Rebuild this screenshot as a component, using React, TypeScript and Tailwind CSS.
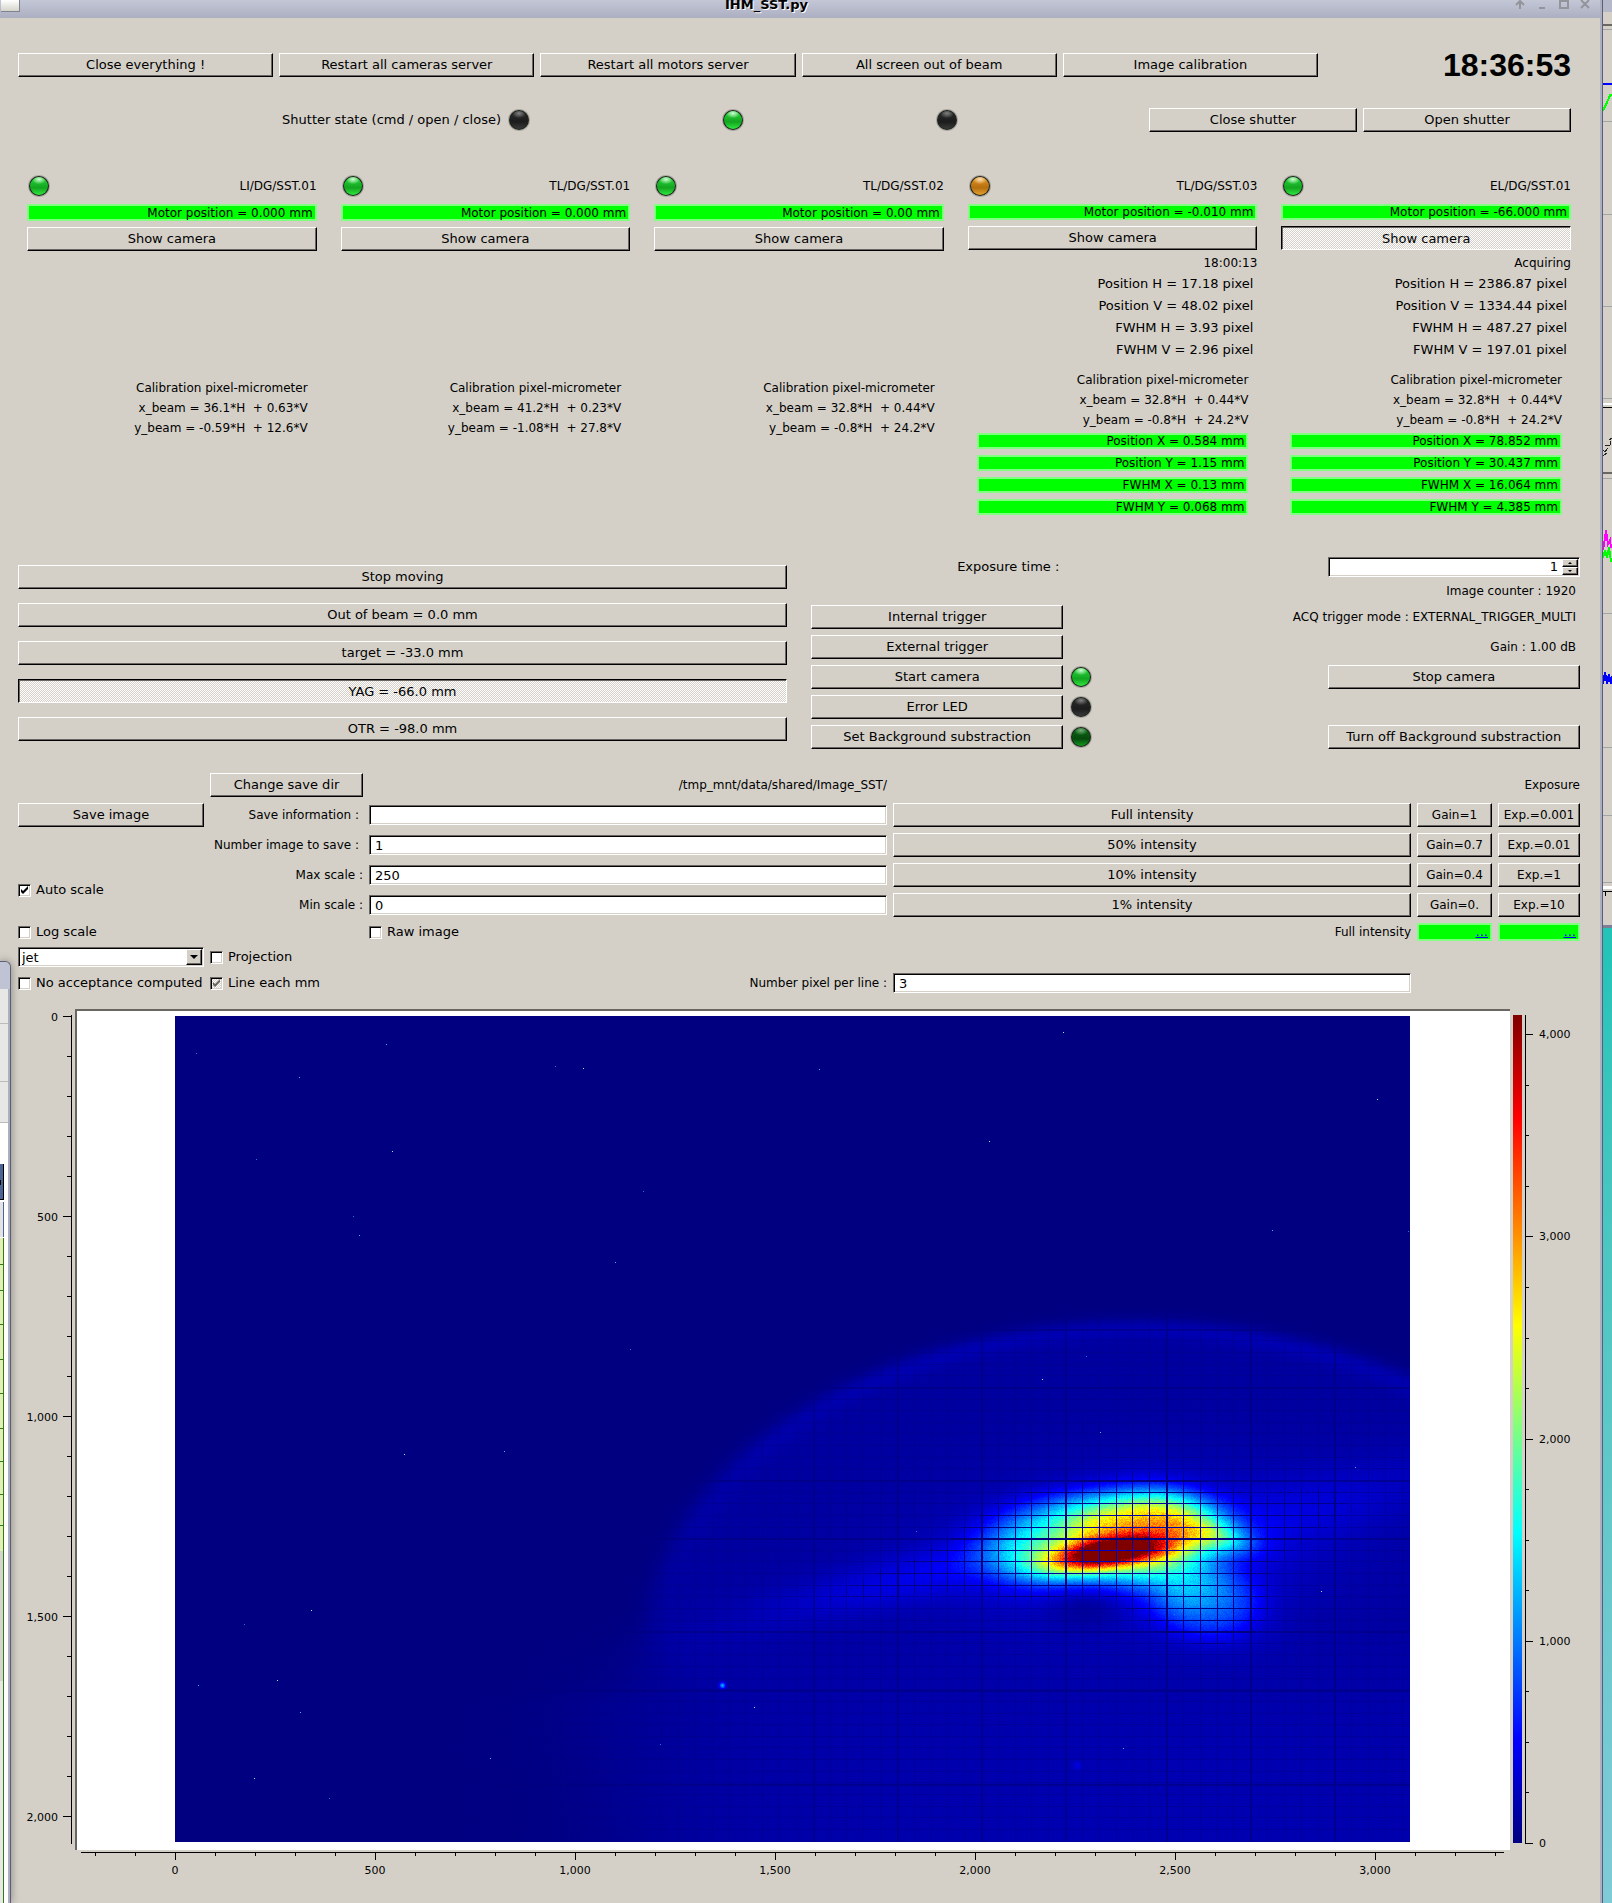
import { ReactNode, useEffect, useRef, useState } from "react";

const SUNKEN =
  "border border-t-[#6a6762] border-l-[#6a6762] border-r-white border-b-white shadow-[inset_1px_1px_0_#000,inset_-1px_-1px_0_#d4d0c8]";

const RAISED =
  "border border-t-white border-l-white border-r-black border-b-black shadow-[inset_-1px_-1px_0_#6a6762]";

const DITHER =
  "bg-[repeating-conic-gradient(#ffffff_0_25%,#d4d0c8_0_50%)] bg-[length:2px_2px]";

interface ButtonProps {
  children: ReactNode;
  pressed?: boolean;
  className?: string;
}

function Button({ children, pressed, className = "" }: ButtonProps) {
  return (
    <button
      className={`flex h-6 items-center justify-center whitespace-nowrap ${
        pressed
          ? `border border-t-black border-l-black border-r-white border-b-white pt-px shadow-[inset_1px_1px_0_#6a6762] ${DITHER}`
          : RAISED
      } ${className}`}
    >
      {children}
    </button>
  );
}

type LedColor = "green" | "darkgreen" | "black" | "orange";

const ledStops: Record<LedColor, string[]> = {
  green: ["#22d035", "#14a420", "#2fe83f", "#e4ffe6"],
  darkgreen: ["#0c6414", "#064a0c", "#149a20", "#7fb684"],
  black: ["#2a2a2a", "#1c1c1c", "#3a3a3a", "#8a8a8a"],
  orange: ["#e08f1c", "#b56f10", "#e5a02c", "#ffe9c8"],
};

function Led({ color, className = "" }: { color: LedColor; className?: string }) {
  const [top, mid, low, shine] = ledStops[color];
  return (
    <svg viewBox="0 0 22 22" className={`h-[22px] w-6 shrink-0 ${className}`}>
      <defs>
        <linearGradient id={`led-${color}`} x1="0" y1="0" x2="0" y2="1">
          <stop offset="0.1" stopColor={top} />
          <stop offset="0.6" stopColor={mid} />
          <stop offset="1" stopColor={low} />
        </linearGradient>
        <radialGradient id={`shine-${color}`} cx="0.5" cy="0.3" r="0.6">
          <stop offset="0" stopColor={shine} stopOpacity="0.9" />
          <stop offset="1" stopColor={shine} stopOpacity="0" />
        </radialGradient>
      </defs>
      <circle cx="11" cy="11" r="11" fill="#8d8a84" opacity="0.6" />
      <circle cx="11" cy="11" r="10" fill="#1c241c" />
      <circle cx="11" cy="11" r="9" fill={`url(#led-${color})`} />
      <ellipse cx="11" cy="6" rx="6" ry="4" fill={`url(#shine-${color})`} />
    </svg>
  );
}

function Value({ children, className = "h-4" }: { children: ReactNode; className?: string }) {
  return (
    <div
      className={`flex items-center justify-end whitespace-nowrap border-2 border-[#80ff80] bg-[#00ff00] pr-0.5 ${className}`}
    >
      {children}
    </div>
  );
}

interface CheckProps {
  label: string;
  checked?: boolean;
  partial?: boolean;
  className?: string;
}

function Check({ label, checked = false, partial, className = "" }: CheckProps) {
  const [on, setOn] = useState(checked);
  return (
    <label className={`flex items-center gap-[5px] whitespace-nowrap ${className}`}>
      <span className="relative flex h-[13px] w-[13px]">
        <input
          type="checkbox"
          checked={on}
          onChange={(e) => setOn(e.target.checked)}
          className={`h-[13px] w-[13px] appearance-none ${SUNKEN} ${partial ? DITHER : "bg-white"}`}
        />
        {on && (
          <svg viewBox="0 0 13 13" className="pointer-events-none absolute inset-0">
            <path
              d="M3 5v3l2 2 5-5V2L5 7z"
              fill={partial ? "#6a6762" : "#000"}
            />
          </svg>
        )}
      </span>
      {label}
    </label>
  );
}

interface FieldProps {
  id: string;
  label: string;
  value: string;
  labelClass: string;
  inputClass: string;
}

function Field({ id, label, value, labelClass, inputClass }: FieldProps) {
  return (
    <>
      <label
        htmlFor={id}
        className={`self-center whitespace-nowrap text-right text-[12px] leading-4 ${labelClass}`}
      >
        {label}
      </label>
      <input
        id={id}
        defaultValue={value}
        className={`h-5 min-w-0 self-center bg-white px-[5px] ${SUNKEN} ${inputClass}`}
      />
    </>
  );
}

interface Station {
  name: string;
  led: LedColor;
  motor: string;
  calibration: string[];
  active?: boolean;
  status?: string;
  pixels?: string[];
  beam?: string[];
}

const stations: Station[] = [
  {
    name: "LI/DG/SST.01",
    led: "green",
    motor: "0.000",
    calibration: ["x_beam = 36.1*H  + 0.63*V", "y_beam = -0.59*H  + 12.6*V"],
  },
  {
    name: "TL/DG/SST.01",
    led: "green",
    motor: "0.000",
    calibration: ["x_beam = 41.2*H  + 0.23*V", "y_beam = -1.08*H  + 27.8*V"],
  },
  {
    name: "TL/DG/SST.02",
    led: "green",
    motor: "0.00",
    calibration: ["x_beam = 32.8*H  + 0.44*V", "y_beam = -0.8*H  + 24.2*V"],
  },
  {
    name: "TL/DG/SST.03",
    led: "orange",
    motor: "-0.010",
    calibration: ["x_beam = 32.8*H  + 0.44*V", "y_beam = -0.8*H  + 24.2*V"],
    status: "18:00:13",
    pixels: [
      "Position H = 17.18 pixel",
      "Position V = 48.02 pixel",
      "FWHM H = 3.93 pixel",
      "FWHM V = 2.96 pixel",
    ],
    beam: [
      "Position X = 0.584 mm",
      "Position Y = 1.15 mm",
      "FWHM X = 0.13 mm",
      "FWHM Y = 0.068 mm",
    ],
  },
  {
    name: "EL/DG/SST.01",
    led: "green",
    motor: "-66.000",
    calibration: ["x_beam = 32.8*H  + 0.44*V", "y_beam = -0.8*H  + 24.2*V"],
    active: true,
    status: "Acquiring",
    pixels: [
      "Position H = 2386.87 pixel",
      "Position V = 1334.44 pixel",
      "FWHM H = 487.27 pixel",
      "FWHM V = 197.01 pixel",
    ],
    beam: [
      "Position X = 78.852 mm",
      "Position Y = 30.437 mm",
      "FWHM X = 16.064 mm",
      "FWHM Y = 4.385 mm",
    ],
  },
];

function StationPanel({ station }: { station: Station }) {
  return (
    <section className="flex flex-col text-[12px] leading-4">
      <div className="flex items-center justify-between">
        <Led color={station.led} />
        <span>{station.name}</span>
      </div>
      <Value className={station.status ? "mt-[7px] h-4" : "mt-[7px] h-[17px]"}>
        Motor position = {station.motor} mm
      </Value>
      <Button pressed={station.active} className="mt-1.5 text-[13px]">
        Show camera
      </Button>
      {station.status && (
        <div className="mt-[5px] text-right">
          <p>{station.status}</p>
          <div className="mt-0.5 pr-1 text-[13px] leading-[22px]">
            {station.pixels?.map((line) => (
              <p key={line}>{line}</p>
            ))}
          </div>
        </div>
      )}
      <div
        className={`mx-[9px] whitespace-pre text-right leading-5 ${
          station.status ? "mt-[9px]" : "mt-[127px]"
        }`}
      >
        <p>Calibration pixel-micrometer</p>
        {station.calibration.map((line) => (
          <p key={line}>{line}</p>
        ))}
      </div>
      {station.beam && (
        <div className="mx-[9px] mt-[3px] flex flex-col gap-1.5">
          {station.beam.map((line) => (
            <Value key={line}>{line}</Value>
          ))}
        </div>
      )}
    </section>
  );
}

const presets = [
  { intensity: "Full intensity", gain: "Gain=1", exp: "Exp.=0.001", row: "row-start-2" },
  { intensity: "50% intensity", gain: "Gain=0.7", exp: "Exp.=0.01", row: "row-start-3" },
  { intensity: "10% intensity", gain: "Gain=0.4", exp: "Exp.=1", row: "row-start-4" },
  { intensity: "1% intensity", gain: "Gain=0.", exp: "Exp.=10", row: "row-start-5" },
];

const W = 1235;
const H = 826;

// [cx, cy, rx, ry, angle, power, amplitude]
const lobes = [
  [930, 537, 52, 14, -9, 1, 0.72],
  [930, 521, 116, 47, -3, 2, 0.3],
  [962, 512, 74, 32, -3, 1.5, 0.26],
  [1000, 492, 46, 24, 20, 1, 0.1],
  [1045, 521, 34, 14, 12, 1, 0.18],
  [1008, 566, 64, 38, 24, 1, 0.18],
  [1034, 588, 52, 36, 0, 2, 0.07],
  [860, 550, 60, 26, 0, 1, 0.08],
  [960, 535, 190, 75, -5, 1, 0.06],
  [755, 556, 170, 24, -14, 1, 0.06],
  [1110, 500, 170, 34, -16, 1, 0.04],
  [547, 669, 3, 3, 0, 1, 0.25],
  [902, 749, 4, 4, 0, 1, 0.05],
];

const hotPixels = [
  [211, 28], [380, 50], [408, 52], [124, 61], [468, 175], [814, 125], [440, 246],
  [455, 333], [229, 438], [329, 435], [178, 200], [217, 135], [184, 219], [81, 143],
  [1202, 83], [1097, 214], [911, 340], [867, 363], [925, 416], [741, 515], [579, 691],
  [315, 742], [485, 728], [102, 664], [23, 669], [69, 608], [136, 594], [125, 696],
  [154, 782], [79, 762], [948, 732], [999, 598], [1146, 575], [1180, 451], [1233, 215],
  [888, 16], [644, 53], [21, 37],
];

function jet(v: number) {
  const c = (x: number) => Math.max(0, Math.min(1, x)) * 255;
  return [
    c(1.5 - Math.abs(4 * v - 3)),
    c(1.5 - Math.abs(4 * v - 2)),
    c(1.5 - Math.abs(4 * v - 1)),
  ];
}

function noise(x: number, y: number) {
  const s = Math.sin(x * 12.9898 + y * 78.233) * 43758.5453;
  return s - Math.floor(s) - 0.5;
}

// 0 = no line, 1 = thin, 2 = major
function lineAt(pos: number, origin: number, pitch: number, majors: number[]) {
  if (majors.some((m) => pos === m || pos === m + 1)) return 2;
  const k = Math.round((pos - origin) / pitch);
  return Math.round(origin + k * pitch) === pos ? 1 : 0;
}

const majorX = [638, 722, 806, 890, 991, 1075, 1159];
const majorY = [313, 371, 464, 522, 615, 674, 768];

function intensity(x: number, y: number) {
  const ex = (x - 962) / 490;
  const ey = (y - 632) / 326;
  const r = Math.hypot(ex, ey);
  const disc = y < 632 ? r : Math.abs(ex);
  // the rim softens towards the bottom of the screen
  const edge = y < 600 ? 60 : Math.max(9, 60 - (y - 600) * 0.6);
  let v = 0.031 / (1 + Math.exp((disc - 1) * edge));
  if (y < 632) v += 0.026 * Math.exp(-(((r - 0.98) / 0.03) ** 2)) * -ey;
  if (y > 600) {
    v += 0.01 * Math.min(1, (y - 600) / 150) * Math.exp(-(((x - 1000) / 330) ** 2));
    const q = Math.hypot((x - 962) / 590, (y - 620) / 420);
    v += (0.008 * Math.min(1, (y - 600) / 100)) / (1 + Math.exp((q - 1) * 25));
  }
  for (const [cx, cy, rx, ry, deg, p, a] of lobes) {
    const t = (deg * Math.PI) / 180;
    const dx = x - cx;
    const dy = y - cy;
    const u = (dx * Math.cos(t) + dy * Math.sin(t)) / rx;
    const w = (-dx * Math.sin(t) + dy * Math.cos(t)) / ry;
    v += a * Math.exp(-((u * u + w * w) ** p));
  }
  // shadow under the core
  const shade = Math.exp(-(((x - 910) / 38) ** 2) - ((y - 592) / 22) ** 2);
  return v * (1 - 0.6 * shade);
}

function BeamImage() {
  const ref = useRef<HTMLCanvasElement>(null);

  useEffect(() => {
    const ctx = ref.current?.getContext("2d");
    if (!ctx) return;
    const image = ctx.createImageData(W, H);
    const cols = Array.from({ length: W }, (_, x) => lineAt(x, 806, 16.83, majorX));
    for (let y = 0; y < H; y++) {
      const row = lineAt(y, 464, 11.63, majorY);
      for (let x = 0; x < W; x++) {
        let v = intensity(x, y);
        v += noise(x, y) * (v * 0.12 + 0.003);
        const line = Math.max(row, cols[x]);
        if (line === 2) v *= v > 0.08 ? 0 : 0.35;
        if (line === 1) v *= v > 0.08 ? 0.05 : 0.6;
        const [r, g, b] = jet(Math.max(0, Math.min(1, v)));
        const i = (y * W + x) * 4;
        image.data[i] = r;
        image.data[i + 1] = g;
        image.data[i + 2] = b;
        image.data[i + 3] = 255;
      }
    }
    ctx.putImageData(image, 0, 0);
    hotPixels.forEach(([x, y], i) => {
      ctx.fillStyle = ["#4fb4ff", "#2a6cff", "#7dffd0"][i % 3];
      ctx.fillRect(x, y, 1, 1);
    });
  }, []);

  return <canvas ref={ref} width={W} height={H} className="block h-auto w-full" />;
}

function range(from: number, to: number, step: number) {
  const out: number[] = [];
  for (let v = from; v <= to; v += step) out.push(v);
  return out;
}

const fmt = (v: number) => v.toLocaleString("en-US");

function YAxis() {
  return (
    <svg viewBox="0 0 57 841" className="w-full text-[11px]" shapeRendering="crispEdges">
      <path d="M53 6h1v829h-1z" />
      {range(0, 2000, 100).map((v) => {
        const major = v % 500 === 0;
        const y = 7 + v * 0.4;
        return (
          <g key={v}>
            <rect x={major ? 45 : 49} y={y} width={major ? 8 : 4} height="1" />
            {major && (
              <text x="40" y={y + 5} textAnchor="end">
                {fmt(v)}
              </text>
            )}
          </g>
        );
      })}
    </svg>
  );
}

function XAxis() {
  return (
    <svg viewBox="0 0 1435 53" className="w-full text-[11px]" shapeRendering="crispEdges">
      <path d="M6 2h1423v1H6z" />
      {range(-200, 3300, 100).map((v) => {
        const major = v % 500 === 0;
        const x = 100 + v * 0.4;
        return (
          <g key={v}>
            <rect x={x} y="2" width="1" height={major ? 8 : 4} />
            {major && (
              <text x={x} y="24" textAnchor="middle">
                {fmt(v)}
              </text>
            )}
          </g>
        );
      })}
    </svg>
  );
}

function ColorBar() {
  return (
    <svg viewBox="0 0 70 841" className="w-full text-[11px]" shapeRendering="crispEdges">
      <defs>
        <linearGradient id="jet" x1="0" y1="1" x2="0" y2="0">
          <stop offset="0" stopColor="#000080" />
          <stop offset="0.125" stopColor="#0000ff" />
          <stop offset="0.375" stopColor="#00ffff" />
          <stop offset="0.625" stopColor="#ffff00" />
          <stop offset="0.875" stopColor="#ff0000" />
          <stop offset="1" stopColor="#800000" />
        </linearGradient>
      </defs>
      <rect x="3" y="6" width="9" height="828" fill="url(#jet)" />
      <path d="M15 6h1v829h-1z" />
      {range(0, 4000, 250).map((v) => {
        const major = v % 1000 === 0;
        const y = Math.round(834 - v * 0.2022);
        return (
          <g key={v}>
            <rect x="15" y={y} width={major ? 8 : 4} height="1" />
            {major && (
              <text x="29" y={y + 4}>
                {fmt(v)}
              </text>
            )}
          </g>
        );
      })}
    </svg>
  );
}

function TitleBar() {
  return (
    <header className="flex h-[18px] items-start bg-linear-to-b from-[#c3c7d6] to-[#abafc1] pr-[7px] pl-px">
      <span className="h-3 w-[19px] border-r border-b border-[#7f8290] bg-linear-to-b from-white to-[#d4d4ca]" />
      <h1 className="flex-1 text-center text-[13px] leading-[10px] font-bold [text-shadow:1px_1px_0_#fff]">
        IHM_SST.py
      </h1>
      <svg viewBox="0 0 80 10" className="h-2.5 w-20" fill="none" stroke="#94959b" strokeWidth="2">
        <path d="M7 9V1M3 5l4-4 4 4M26 8h6M47 1h8v7h-8zM68 0l8 8M76 0l-8 8" />
      </svg>
    </header>
  );
}

// Neighbour window showing past the right edge
function RightWindow() {
  return (
    <svg viewBox="0 0 9 1903" className="absolute top-0 right-0 h-[1903px] w-[9px]" shapeRendering="crispEdges">
      <path d="M0 0h9v928H0z" fill="#d4d0c8" />
      <path d="M0 0h9v12H0z" fill="#b4b8c9" />
      <path d="M0 24h9v2H0zM0 472h9v2H0z" fill="#6a6762" />
      <path
        d="M0 29h9M0 121h9M0 214h9M0 306h9M0 398h9M0 478h9M0 613h9M0 747h9M0 815h9M0 882h9"
        stroke="#a5a4a6"
      />
      <path d="M0 403h9v2H0zM0 886h9v3H0z" fill="#fff" />
      <path d="M0 407h9v1H0zM0 891h9v1H0zM2 892h1v4H2z" />
      <path d="M0 84h9" stroke="#00f" strokeWidth="2" />
      <path d="M0 111l6-13 1-3h2" stroke="#0f0" strokeWidth="2" fill="none" />
      <path d="M0 550l2-12 1-8 2 14 2-4 1 8" stroke="#f0f" strokeWidth="2" fill="none" />
      <path d="M0 558l2-8 2 8 2-11 2 15" stroke="#0f0" strokeWidth="2" fill="none" />
      <path d="M0 684l2-12 2 12 2-10 2 10 1-8" stroke="#00f" fill="none" strokeWidth="2" />
      <path d="M0 456l4-3M0 450l2 2 3-4M2 446l5-1v-4M6 440l3-2" stroke="#222" fill="none" />
      <path d="M0 925h9v3H0z" fill="#7d8094" />
    </svg>
  );
}

const cellLines = [1264, 1290, 1324, 1359, 1393, 1428, 1461, 1494, 1525, 1551];

// Neighbour window lying over the left edge
function LeftWindow() {
  return (
    <div className="absolute top-[961px] bottom-0 left-0 w-[11px] overflow-hidden rounded-tr-md border-t border-r border-[#5b5f74] bg-[#abafc1] shadow-[0_0_8px_#00000060]">
      <svg viewBox="0 962 10 941" className="h-[941px] w-2.5" shapeRendering="crispEdges">
        <path d="M0 962h10v27H0z" fill="#bfc3d3" />
        <path d="M0 989h8v914H0z" fill="#fff" />
        <path d="M0 989h8v133H0z" fill="#e7e7e5" />
        <path d="M0 1023h8M0 1081h8M0 1122h8" stroke="#bbb" />
        <path d="M0 1164h4v36H0z" fill="#4a6496" />
        <path d="M3 1164h1v36H0v-1h3z" />
        <path d="M0 1180h1v5H0z" />
        <path d="M0 1202h3v35H0z" fill="#e3e3e3" />
        <path d="M3 1202h1v35H3z" fill="#4a6496" />
        <path d="M0 1238h4v313H0z" fill="#e2f0b8" />
        <path d={cellLines.map((y) => `M0 ${y}h4`).join("")} stroke="#347a10" />
        <path d="M0 1551h3v130H0z" fill="#d3d3d0" />
        <path d="M0 1681h3v222H0z" fill="#e7e7e5" />
        <path d="M3 1238h1v665H3z" fill="#347a10" />
      </svg>
    </div>
  );
}

export default function App() {
  const [exposure, setExposure] = useState(1);

  return (
    <div className="relative min-h-screen overflow-hidden bg-linear-to-b from-[#22c4b8] from-50% to-[#7fcbd8] font-['DejaVu_Sans',sans-serif] text-[13px] leading-4 text-black">
      <RightWindow />
      <main className="relative mr-[9px] min-h-screen border-r border-[#5b5f74] bg-[#abafc1] pr-0.5">
        <TitleBar />
        <div className="min-h-[1885px] bg-[#d4d0c8] pt-[35px] pr-5 pl-[18px]">
          <div className="mr-[9px] flex items-center gap-1.5">
            <Button className="flex-1">Close everything !</Button>
            <Button className="flex-1">Restart all cameras server</Button>
            <Button className="flex-1">Restart all motors server</Button>
            <Button className="flex-1">All screen out of beam</Button>
            <Button className="flex-1">Image calibration</Button>
            <time className="w-[247px] text-right font-['Liberation_Sans',Arial,sans-serif] text-[32px] leading-6 font-bold">
              18:36:53
            </time>
          </div>

          <div className="mt-[31px] mr-[9px] grid grid-cols-[1fr_208px_208px_208px_208px_208px] items-center gap-1.5">
            <span className="text-right">Shutter state (cmd / open / close)</span>
            <Led color="black" />
            <Led color="green" />
            <Led color="black" />
            <Button>Close shutter</Button>
            <Button>Open shutter</Button>
          </div>

          <div className="mt-[43px] mr-[9px] ml-[9px] grid grid-cols-5 gap-6">
            {stations.map((s) => (
              <StationPanel key={s.name} station={s} />
            ))}
          </div>

          <div className="mt-[42px] grid grid-cols-2 gap-6">
            <div className="flex flex-col gap-3.5 pt-2">
              <Button>Stop moving</Button>
              <Button>Out of beam = 0.0 mm</Button>
              <Button>target = -33.0 mm</Button>
              <Button pressed>YAG = -66.0 mm</Button>
              <Button>OTR = -98.0 mm</Button>
            </div>
            <div>
              <div className="grid grid-cols-3 gap-1.5">
                <label htmlFor="exposure" className="self-center pr-1 text-right">
                  Exposure time :
                </label>
                <div className={`col-start-3 flex h-5 bg-white p-px ${SUNKEN}`}>
                  <input
                    id="exposure"
                    inputMode="numeric"
                    value={exposure}
                    onChange={(e) => setExposure(Number(e.target.value) || 0)}
                    className="min-w-0 flex-1 bg-transparent pr-1 text-right outline-none"
                  />
                  <div className="flex w-4 flex-col">
                    <button
                      onClick={() => setExposure(exposure + 1)}
                      className={`flex flex-1 items-center justify-center bg-[#d4d0c8] ${RAISED}`}
                    >
                      <svg viewBox="0 0 4 2" className="h-0.5 w-1">
                        <path d="M0 2h4L2 0z" />
                      </svg>
                    </button>
                    <button
                      onClick={() => setExposure(exposure - 1)}
                      className={`flex flex-1 items-center justify-center bg-[#d4d0c8] ${RAISED}`}
                    >
                      <svg viewBox="0 0 4 2" className="h-0.5 w-1">
                        <path d="M0 0h4L2 2z" />
                      </svg>
                    </button>
                  </div>
                </div>
              </div>
              <p className="pr-1 text-right text-[12px] leading-7">Image counter : 1920</p>
              <div className="grid grid-cols-3 items-center gap-1.5">
                <Button>Internal trigger</Button>
                <p className="col-span-2 pr-1 text-right text-[12px]">
                  ACQ trigger mode : EXTERNAL_TRIGGER_MULTI
                </p>
                <Button>External trigger</Button>
                <p className="col-span-2 pr-1 text-right text-[12px]">Gain : 1.00 dB</p>
                <Button>Start camera</Button>
                <Led color="green" />
                <Button>Stop camera</Button>
                <Button>Error LED</Button>
                <Led color="black" className="col-span-2" />
                <Button>Set Background substraction</Button>
                <Led color="darkgreen" />
                <Button>Turn off Background substraction</Button>
              </div>
            </div>
          </div>

          <div className="mt-6 grid grid-cols-[186px_153px_1fr_1fr_75px_82px] grid-rows-[24px_24px_24px_24px_24px_18px_20px_20px] gap-1.5">
            <Button className="col-start-2 row-start-1">Change save dir</Button>
            <p className="col-start-3 row-start-1 self-center text-right text-[12px]">
              /tmp_mnt/data/shared/Image_SST/
            </p>
            <p className="col-start-6 row-start-1 self-center text-right text-[12px]">Exposure</p>

            <Button className="col-start-1 row-start-2">Save image</Button>
            <Field
              id="info"
              label="Save information :"
              value=""
              labelClass="col-start-2 row-start-2 pr-1"
              inputClass="col-start-3 row-start-2"
            />
            <Field
              id="count"
              label="Number image to save :"
              value="1"
              labelClass="col-start-2 row-start-3 pr-1"
              inputClass="col-start-3 row-start-3"
            />
            <Field
              id="max"
              label="Max scale :"
              value="250"
              labelClass="col-start-2 row-start-4"
              inputClass="col-start-3 row-start-4"
            />
            <Field
              id="min"
              label="Min scale :"
              value="0"
              labelClass="col-start-2 row-start-5"
              inputClass="col-start-3 row-start-5"
            />
            <Check label="Auto scale" checked className="col-start-1 row-start-4 row-span-2" />

            {presets.map((p) => (
              <div key={p.intensity} className="contents">
                <Button className={`col-start-4 ${p.row}`}>{p.intensity}</Button>
                <Button className={`col-start-5 text-[12px] ${p.row}`}>{p.gain}</Button>
                <Button className={`col-start-6 text-[12px] ${p.row}`}>{p.exp}</Button>
              </div>
            ))}

            <Check label="Log scale" className="col-start-1 row-start-6" />
            <Check label="Raw image" className="col-start-3 row-start-6" />
            <p className="col-start-4 row-start-6 self-center text-right text-[12px]">
              Full intensity
            </p>
            <Value className="col-start-5 row-start-6 h-[18px]">
              <a href="#gain" className="text-[#0000ff] underline">...</a>
            </Value>
            <Value className="col-start-6 row-start-6 h-[18px]">
              <a href="#exposure" className="text-[#0000ff] underline">...</a>
            </Value>

            <div className={`relative col-start-1 row-start-7 bg-white p-0.5 ${SUNKEN}`}>
              <select
                aria-label="jet"
                className="h-full w-full appearance-none bg-transparent pl-px leading-[14px]"
              >
                <option>jet</option>
              </select>
              <span
                className={`pointer-events-none absolute top-px right-px bottom-px flex w-4 items-center justify-center bg-[#d4d0c8] ${RAISED}`}
              >
                <svg viewBox="0 0 8 4" className="h-1 w-2">
                  <path d="M0 0h8L4 4z" />
                </svg>
              </span>
            </div>
            <Check label="Projection" className="col-start-2 row-start-7" />
            <Check label="No acceptance computed" className="col-start-1 row-start-8" />
            <Check label="Line each mm" checked partial className="col-start-2 row-start-8" />
            <Field
              id="pixels"
              label="Number pixel per line :"
              value="3"
              labelClass="col-start-3 row-start-8"
              inputClass="col-start-4 row-start-8"
            />
          </div>

          <div className="mt-4 grid grid-cols-[57px_1fr_70px] items-start">
            <YAxis />
            <div className="border-t-2 border-l-2 border-[#6a6762] bg-white pt-[5px] pr-[100px] pb-2 pl-[98px]">
              <BeamImage />
            </div>
            <ColorBar />
            <div className="col-start-2">
              <XAxis />
            </div>
          </div>
        </div>
      </main>
      <LeftWindow />
    </div>
  );
}
